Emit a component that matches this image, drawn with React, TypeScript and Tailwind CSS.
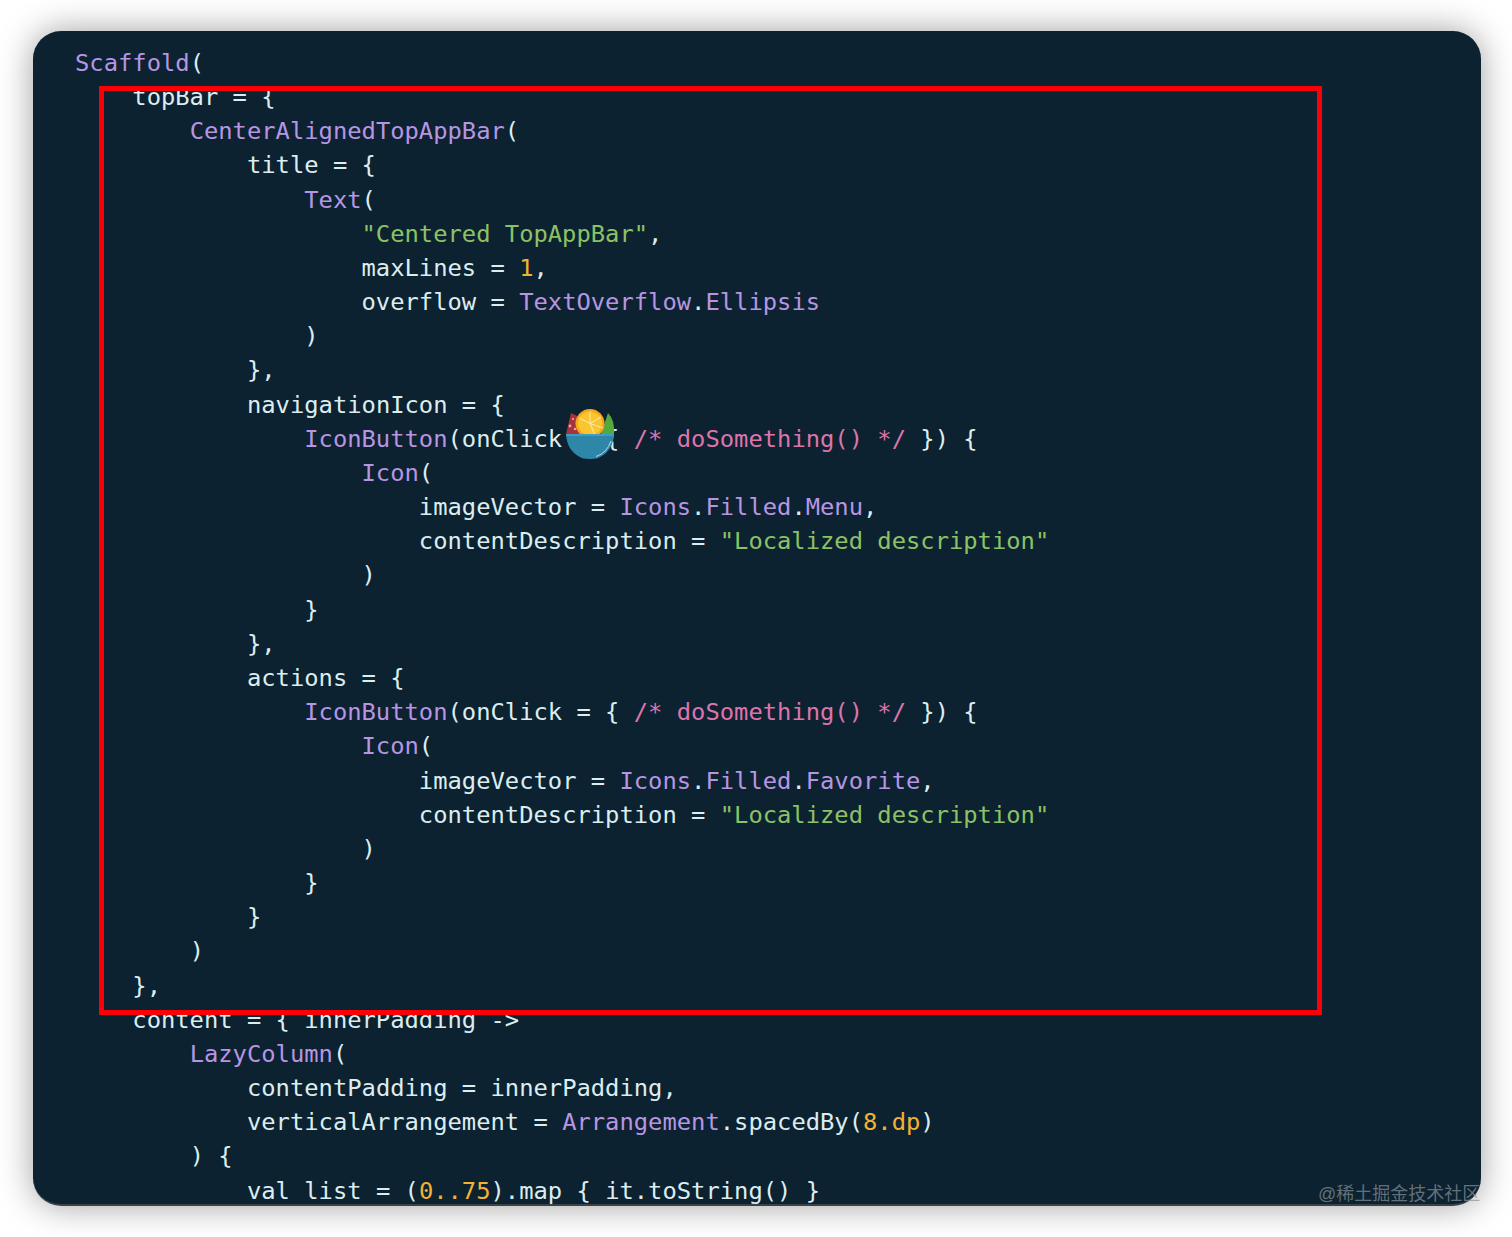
const P = 'text-[#b795e3]';
const G = 'text-[#8cc265]';
const O = 'text-[#f2b233]';
const K = 'text-[#dd74ab]';

type Seg = string | [string, string];

// each line is indent (in 4-char steps) plus coloured pieces
const lines: [number, Seg[]][] = [
  [0, [['Scaffold', P], '(']],
  [1, ['topBar = {']],
  [2, [['CenterAlignedTopAppBar', P], '(']],
  [3, ['title = {']],
  [4, [['Text', P], '(']],
  [5, [['"Centered TopAppBar"', G], ',']],
  [5, ['maxLines = ', ['1', O], ',']],
  [5, ['overflow = ', ['TextOverflow', P], '.', ['Ellipsis', P]]],
  [4, [')']],
  [3, ['},']],
  [3, ['navigationIcon = {']],
  [4, [['IconButton', P], '(onClick = { ', ['/* doSomething() */', K], ' }) {']],
  [5, [['Icon', P], '(']],
  [6, ['imageVector = ', ['Icons', P], '.', ['Filled', P], '.', ['Menu', P], ',']],
  [6, ['contentDescription = ', ['"Localized description"', G]]],
  [5, [')']],
  [4, ['}']],
  [3, ['},']],
  [3, ['actions = {']],
  [4, [['IconButton', P], '(onClick = { ', ['/* doSomething() */', K], ' }) {']],
  [5, [['Icon', P], '(']],
  [6, ['imageVector = ', ['Icons', P], '.', ['Filled', P], '.', ['Favorite', P], ',']],
  [6, ['contentDescription = ', ['"Localized description"', G]]],
  [5, [')']],
  [4, ['}']],
  [3, ['}']],
  [2, [')']],
  [1, ['},']],
  [1, ['content = { innerPadding ->']],
  [2, [['LazyColumn', P], '(']],
  [3, ['contentPadding = innerPadding,']],
  [3, ['verticalArrangement = ', ['Arrangement', P], '.spacedBy(', ['8.dp', O], ')']],
  [2, [') {']],
  [3, ['val list = (', ['0..75', O], ').map { it.toString() }']],
];

function Bowl() {
  return (
    <svg viewBox="0 0 50 52" className="absolute left-[565px] top-[408px] w-[50px] h-[52px]">
      <path d="M1 26 L6 5 Q18 9 26 26 Z" fill="#a5323c" />
      <circle cx="5" cy="18" r="1.4" fill="#eaa7a0" />
      <circle cx="8" cy="11" r="1.1" fill="#eaa7a0" />
      <circle cx="10" cy="21" r="1.2" fill="#eaa7a0" />
      <path d="M36 26 L43 5 Q50 12 49 26 Z" fill="#55a83c" />
      <circle cx="25" cy="15.5" r="14.5" fill="#f6a71c" />
      <circle cx="25" cy="15.5" r="12" fill="#fcc52d" />
      <path d="M25 15.5 L25 3.5 M25 15.5 L14 10 M25 15.5 L36 9 M25 15.5 L38 20 M25 15.5 L30 27" stroke="#fbe7a0" strokeWidth="1.1" />
      <path d="M1 26 H49 Q48 42 36 48.5 Q33 51 25 51 Q17 51 14 48.5 Q2 42 1 26 Z" fill="#2e86a8" />
      <path d="M1 26 H49 L48.8 28 H1.2 Z" fill="#3d9dc4" />
      <path d="M31 48.5 Q42 45 46 33" fill="none" stroke="#d4ecf5" strokeWidth="0.8" />
    </svg>
  );
}

export default function App() {
  return (
    <div className="relative w-[1512px] h-[1237px] bg-white pt-[31px] pl-[33px] pr-[31px] overflow-hidden font-['DejaVu_Sans_Mono',monospace]">
      <div className="h-[1175px] rounded-[28px] bg-[#0c2230] border-b-2 border-[#3a4248] shadow-[0_0_34px_rgba(0,0,0,0.38)] overflow-hidden pt-[14.9px] pl-[42px] text-[23.8px] leading-[34.18px] text-[#dcedf0]">
        {lines.map(([indent, segs], i) => (
          <div key={i} className="whitespace-pre h-[34.18px]">
            {'    '.repeat(indent)}
            {segs.map((s, j) =>
              typeof s === 'string' ? (
                <span key={j}>{s}</span>
              ) : (
                <span key={j} className={s[1]}>
                  {s[0]}
                </span>
              ),
            )}
          </div>
        ))}
      </div>
      <div className="absolute left-[99px] top-[86px] w-[1223px] h-[929px] border-[5px] border-[#fb0007]" />
      <Bowl />
      <span className="absolute left-[1318px] top-[1182px] text-[18px] leading-[24px] text-[#8a949b]/70 font-['Liberation_Sans','Noto_Sans_CJK_SC',sans-serif]">
        @稀土掘金技术社区
      </span>
    </div>
  );
}
